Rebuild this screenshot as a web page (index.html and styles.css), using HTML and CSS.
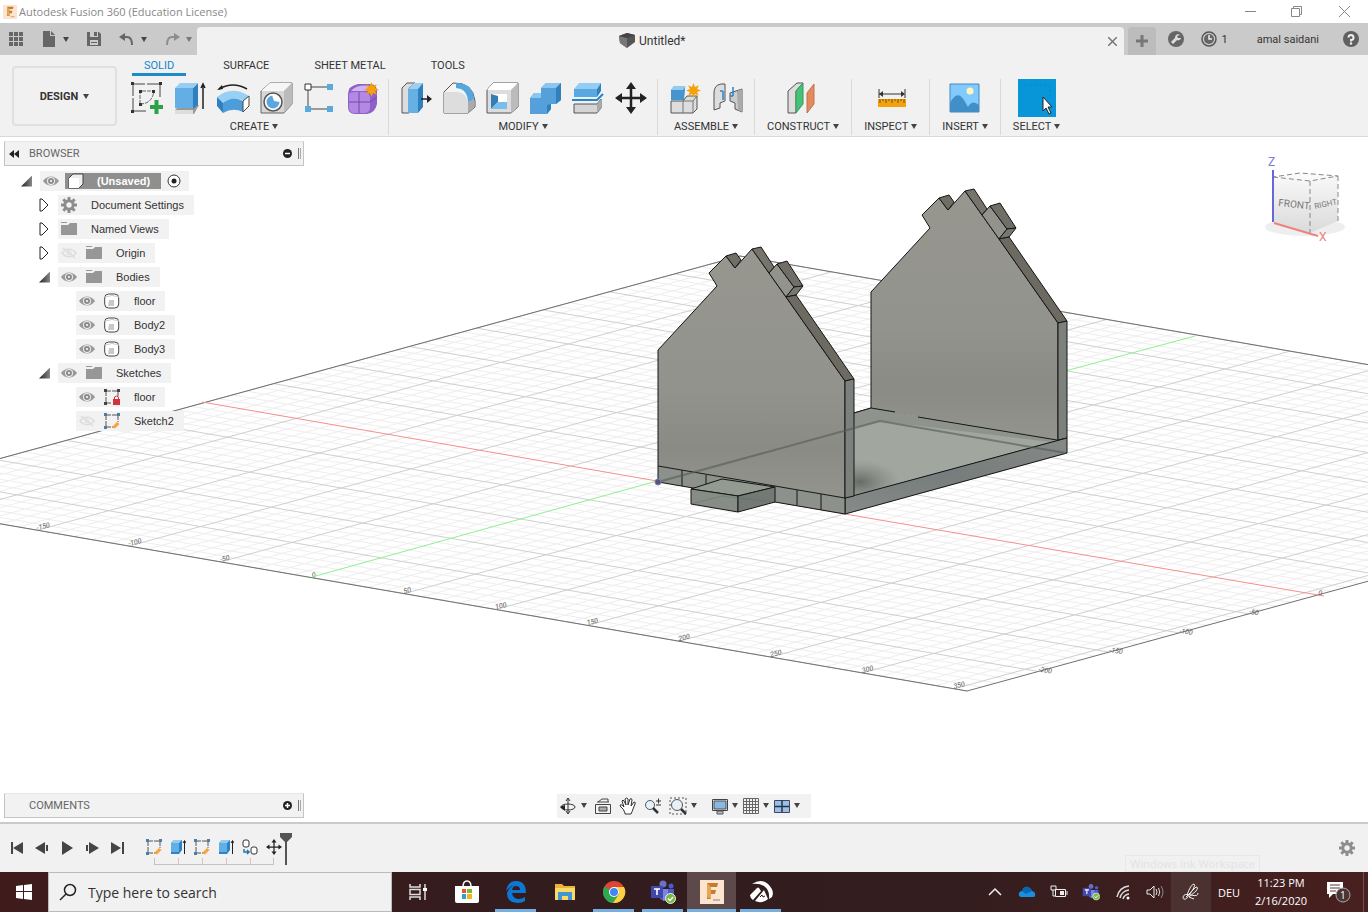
FILE: index.html
```
<!DOCTYPE html>
<html lang="en">

<head>
    <meta charset="UTF-8">
    <meta name="viewport" content="width=device-width, initial-scale=1.0">
    <title>Autodesk Fusion 360 (Education License)</title>
    <link rel="stylesheet" href="styles.css">
</head>

<body>
    <!-- shared icons -->
    <svg class="defs" width="0" height="0" aria-hidden="true">
        <symbol id="eye" viewBox="0 0 16 16">
            <path d="M0 8C4 2 12 2 16 8C12 14 4 14 0 8Z" fill="#999" />
            <circle cx="8" cy="8" r="4" fill="#eee" />
            <circle cx="8" cy="8" r="3" fill="#8c8c8c" />
            <circle cx="8" cy="8" r="1" fill="#fff" />
        </symbol>
        <symbol id="eye-off" viewBox="0 0 16 16">
            <path d="M1 8C5 3 11 3 15 8C11 13 5 13 1 8ZM2 3L14 13" fill="none" stroke="#ddd" stroke-width="1.5" />
            <circle cx="8" cy="8" r="2" fill="none" stroke="#ddd" />
        </symbol>
        <symbol id="folder" viewBox="0 0 16 16">
            <path d="M0 1H6V2H0ZM0 4H7L9 2H16V14H0Z" fill="#979797" />
        </symbol>
        <symbol id="gear" viewBox="0 0 16 16">
            <circle cx="8" cy="8" r="4.2" fill="none" stroke="#8d8d8d" stroke-width="3" />
            <path d="M8 0V3M8 13V16M0 8H3M13 8H16M2.3 2.3L4.5 4.5M11.5 11.5L13.7 13.7M2.3 13.7L4.5 11.5M11.5 4.5L13.7 2.3" stroke="#8d8d8d" stroke-width="3" />
        </symbol>
        <symbol id="body" viewBox="0 0 16 16">
            <rect x=".7" y="1" width="14" height="14" rx="4" fill="#fff" stroke="#444" />
            <path d="M1 4Q8 1 15 4" fill="none" stroke="#ccc" />
            <path d="M5 7H10V13H4Z" fill="#c8c8cc" />
        </symbol>
        <symbol id="sketch" viewBox="0 0 16 16">
            <path d="M2 2H14M2 14H10M2 2V14M14 2V9" fill="none" stroke="#555" stroke-dasharray="5 1" />
            <path d="M0 0H3V3H0ZM13 0H16V3H13ZM0 13H3V16H0Z" fill="#4a7fa5" />
            <path d="M8 14L13 9L15.500 11L11 15.500Z" fill="#f3a63c" />
        </symbol>
        <symbol id="extrude" viewBox="0 0 16 16">
            <path d="M1 4L4 1H12V11L9 15H1Z" fill="#2d83c4" />
            <path d="M1 4H9V13H1Z" fill="#62aee5" />
            <path d="M1 4L4 1H12L9 4Z" fill="#93ccf2" />
            <path d="M14.500 15V2M13 4L14.500 1.500L16 4" stroke="#222" fill="none" />
        </symbol>
        <symbol id="move" viewBox="0 0 32 32">
            <path d="M16 5V27M5 16H27" stroke="#222" stroke-width="2.500" />
            <path d="M16 0L21 7H11ZM16 32L21 25H11ZM0 16L7 11V21ZM32 16L25 11V21Z" fill="#222" />
        </symbol>
        <symbol id="star" viewBox="0 0 16 16">
            <path d="M8 0L9.600 4.200L13.700 2.300L11.800 6.400L16 8L11.800 9.600L13.700 13.700L9.600 11.800L8 16L6.400 11.800L2.300 13.700L4.200 9.600L0 8L4.200 6.400L2.300 2.300L6.400 4.200Z" fill="#f5a10c" />
        </symbol>
        <symbol id="teams" viewBox="0 0 26 24">
            <circle cx="13" cy="4" r="3.500" fill="#6970c8" />
            <circle cx="21" cy="6" r="2.500" fill="#5059c9" />
            <path d="M9 9H24V15Q24 20 19 20H13Q9 20 9 15Z" fill="#5059c9" />
            <path d="M11 9H18V17Q17 21 13 21Z" fill="#7b83eb" />
            <path d="M1 6H13V18H1Z" fill="#4248a8" />
            <path d="M4 9H10M7 9V15" stroke="#fff" stroke-width="1.600" />
            <circle cx="20.500" cy="18.500" r="5" fill="#79b843" stroke="#e8f4dc" />
            <path d="M18 18.500L20 20.500L23 17" fill="none" stroke="#fff" stroke-width="1.400" />
        </symbol>
        <symbol id="fusion" viewBox="0 0 24 24">
            <path d="M0 0H24V24H0Z" fill="#fbe4d0" />
            <path d="M7 3H18L17 7H11V10H16L15 14H11V19H7Z" fill="#c07d2c" />
            <path d="M7 3L11 7V19L7 17Z" fill="#e8a554" />
            <path d="M13 20H20" stroke="#b9a28e" stroke-width="1.500" />
        </symbol>
    </svg>

    <header class="titlebar">
        <svg class="app-icon" viewBox="0 0 24 24"><use href="#fusion" /></svg>
        <h1>Autodesk Fusion 360 (Education License)</h1>
        <button aria-label="Minimize"><svg width="11" height="11"><path d="M0 5.500H11" stroke="#888" /></svg></button>
        <button aria-label="Restore"><svg width="11" height="11"><path d="M.5 2.500H8.500V10.500H.5ZM2.500 2.500V.5H10.500V8.500H8.500" fill="none" stroke="#888" /></svg></button>
        <button aria-label="Close"><svg width="11" height="11"><path d="M0 0L11 11M11 0L0 11" stroke="#888" /></svg></button>
    </header>

    <div class="tabbar">
        <div class="quick">
            <button aria-label="Data panel"><svg width="16" height="16"><path d="M1 1H5V5H1ZM6 1H10V5H6ZM11 1H15V5H11ZM1 6H5V10H1ZM6 6H10V10H6ZM11 6H15V10H11ZM1 11H5V15H1ZM6 11H10V15H6ZM11 11H15V15H11Z" fill="#666" /></svg></button>
            <button aria-label="File"><svg width="16" height="16"><path d="M2 0H9V5H14V16H2ZM10 0L14 4H10Z" fill="#666" /></svg><i class="caret"></i></button>
            <button aria-label="Save"><svg width="16" height="16"><path d="M1 1H13L15 3V15H1Z" fill="#666" /><path d="M4 1H12V6H4ZM4 9H12V14H4Z" fill="#ccc" /><path d="M8 1H11V5H8ZM5 11H11V12H5Z" fill="#666" /></svg></button>
            <button aria-label="Undo"><svg width="16" height="16"><path d="M6 2V10L0 6Z" fill="#666" /><path d="M4 6H8Q13 6 13 14" fill="none" stroke="#666" stroke-width="2" /></svg><i class="caret"></i></button>
            <button aria-label="Redo" class="faded"><svg width="16" height="16"><path d="M10 2V10L16 6Z" fill="#666" /><path d="M12 6H8Q3 6 3 14" fill="none" stroke="#666" stroke-width="2" /></svg><i class="caret"></i></button>
        </div>
        <div class="doc-tab">
            <span class="doc-name">
                <svg width="16" height="16"><path d="M0 3L8 0L16 2V9L8 15L1 10Z" fill="#555" /><path d="M0 3L8 5V15L1 10Z" fill="#777" /><path d="M0 3L8 0L16 2L8 5Z" fill="#444" /></svg>
                Untitled*
            </span>
            <button aria-label="Close tab"><svg width="9" height="9"><path d="M0 0L9 9M9 0L0 9" stroke="#777" stroke-width="1.500" /></svg></button>
        </div>
        <button class="new-tab" aria-label="New tab"><svg width="12" height="12"><path d="M6 0V12M0 6H12" stroke="#777" stroke-width="3" /></svg></button>
        <div class="account">
            <button aria-label="Extensions"><svg width="16" height="16"><circle cx="8" cy="8" r="8" fill="#666" /><path d="M4 12L9 7" stroke="#ddd" stroke-width="3" /><path d="M12 4A3 3 0 1 0 13 7L10 7L9 5Z" fill="#ddd" /></svg></button>
            <button aria-label="Job status"><svg width="16" height="16"><circle cx="8" cy="8" r="7" fill="none" stroke="#555" stroke-width="1.500" /><circle cx="8" cy="8" r="5" fill="#666" /><path d="M8 4V8H11" fill="none" stroke="#eee" stroke-width="1.500" /></svg>1</button>
            <a href="#" class="user">amal saidani</a>
            <button aria-label="Help"><svg width="16" height="16"><circle cx="8" cy="8" r="8" fill="#606060" /><path d="M5.500 6.500A2.500 2.500 0 1 1 8 9V10.500" fill="none" stroke="#eee" stroke-width="2" /><circle cx="8" cy="12.500" r="1.200" fill="#eee" /></svg></button>
        </div>
    </div>

    <section class="ribbon">
        <button class="workspace">DESIGN <i class="caret"></i></button>
        <div class="tools">
            <nav>
                <a href="#" class="active">SOLID</a>
                <a href="#">SURFACE</a>
                <a href="#">SHEET METAL</a>
                <a href="#">TOOLS</a>
            </nav>
            <div class="groups">
                <div class="group">
                    <div class="icons">
                        <button aria-label="Create sketch"><svg width="34" height="34"><path d="M3 3H30V18M3 3V30H18" fill="none" stroke="#444" stroke-dasharray="12 2" /><path d="M10 23V10H24M10 23Q22 23 24 10" fill="none" stroke="#666" stroke-dasharray="4 1" /><path d="M1 1H4V4H1ZM29 1H32V4H29ZM1 29H4V32H1ZM9 9H12V12H9ZM22 9H25V12H22ZM9 22H12V25H9Z" fill="#333" /><path d="M20 26H33M26.500 19V33" stroke="#2ba14a" stroke-width="4" /></svg></button>
                        <button aria-label="Extrude"><svg width="34" height="34"><path d="M2 29L7 24H26L21 33H2Z" fill="#999" /><path d="M2 29H20V33H2Z" fill="#ddd" /><path d="M20 7L25 2V24L20 28Z" fill="#2f80bd" /><path d="M2 7L7 2H25L20 7Z" fill="#95cdf3" /><path d="M2 7H20V27H2Z" fill="#62aee5" /><path d="M30 28V4M28 7L30 3L32 7" fill="none" stroke="#222" stroke-width="1.500" /></svg></button>
                        <button aria-label="Revolve"><svg width="34" height="34"><path d="M3 8Q17 0 31 8" fill="none" stroke="#222" stroke-width="1.500" /><path d="M1 9L6 4L7 8Z" fill="#222" /><path d="M1 16Q16 4 33 15L29 20Q17 14 7 22Z" fill="#98cff4" /><path d="M1 16L7 22V32L1 25Z" fill="#2f80bd" /><path d="M7 22Q17 14 27 20V31Q17 26 7 32Z" fill="#4d9dda" /><path d="M27 20L33 15V25L27 31Z" fill="#fff" stroke="#444" /></svg></button>
                        <button aria-label="Hole"><svg width="34" height="34"><path d="M2 10L11 2H33V23L25 32H2Z" fill="#d6d6d6" stroke="#666" /><path d="M2 10L11 2H33L25 10Z" fill="#f6f6f6" /><path d="M25 10L33 2V23L25 32Z" fill="#bbb" /><circle cx="14" cy="21" r="9" fill="#fff" stroke="#555" stroke-width="1.500" /><circle cx="14" cy="21" r="6.500" fill="#5ba6de" /><path d="M13 14A7 7 0 0 1 21 21L15 20Z" fill="#fff" /></svg></button>
                        <button aria-label="Pattern"><svg width="34" height="34"><path d="M8 6H26M6 8V27M8 28H26" fill="none" stroke="#444" /><path d="M3 3H9V9H3Z" fill="#fff" stroke="#333" /><path d="M25 3H31V9H25ZM3 25H9V31H3ZM25 25H31V31H25Z" fill="#5ca9dc" /></svg></button>
                        <button aria-label="Create form"><svg width="34" height="34"><path d="M3 13Q3 5 13 3H25Q33 3 32 13V23Q30 32 22 33H10Q3 33 3 26Z" fill="#8f60c8" /><path d="M4 13Q5 11 10 11H19Q25 11 25 17V26Q25 32 19 32H10Q4 32 4 26Z" fill="#b388e5" /><path d="M6 10Q12 3 25 5L22 10Z" fill="#d1b3f3" /><path d="M14 11V32M4 21H25L32 16" fill="none" stroke="#7447ad" /><use href="#star" x="19" y="1" width="15" height="15" /></svg></button>
                    </div>
                    <button class="menu">CREATE <i class="caret"></i></button>
                </div>
                <div class="group">
                    <div class="icons">
                        <button aria-label="Press pull"><svg width="34" height="34"><path d="M3 7L8 2H16L10 7V32H3Z" fill="#ddd" stroke="#555" /><path d="M9 8L15 2H24L19 8Z" fill="#9bd0f4" /><path d="M9 8H19V32H9Z" fill="#66b0e4" /><path d="M19 8L24 2V26L19 32Z" fill="#2f80bd" /><path d="M22 18H30" stroke="#222" stroke-width="1.500" /><path d="M28 14L33 18L28 22Z" fill="#222" /></svg></button>
                        <button aria-label="Fillet"><svg width="34" height="34"><path d="M2 11L11 2Q31 1 33 20V26L26 32H2Z" fill="#f4f4f4" stroke="#555" /><path d="M14 2Q31 2 32 18L26 22Q26 8 14 7Z" fill="#56a7df" /><path d="M2 11H14Q25 11 26 23V32H2Z" fill="#ddd" /><path d="M26 22L32 18V26L26 32Z" fill="#aaa" /></svg></button>
                        <button aria-label="Shell"><svg width="34" height="34"><path d="M2 9L8 2H33V26L26 32H2Z" fill="#ddd" stroke="#555" /><path d="M2 9L8 2H33L26 9Z" fill="#fff" /><path d="M26 9L33 2V26L26 32Z" fill="#bbb" /><path d="M6 13H22V28H6Z" fill="#fff" /><path d="M6 13L13 15V21L6 28Z" fill="#347eb5" /><path d="M13 21H22V28H6Z" fill="#78bdeb" /></svg></button>
                        <button aria-label="Combine"><svg width="34" height="34"><path d="M2 17L6 12H13V7L18 2H33V19L28 23H23V28L19 33H2Z" fill="#559fda" /><path d="M2 17L6 12H13V17ZM13 7L18 2H33L28 7Z" fill="#8cc6ef" /><path d="M28 7L33 2V19L28 23ZM19 24L23 23V28L19 33Z" fill="#2f80bd" /></svg></button>
                        <button aria-label="Split body"><svg width="34" height="34"><path d="M3 8L8 2H30L26 8Z" fill="#94cdf3" /><path d="M3 8H26V16H3Z" fill="#58a8e2" /><path d="M26 8L30 2V10L26 16Z" fill="#2f80bd" /><path d="M1 19H26L32 13" fill="none" stroke="#2186d2" stroke-width="2" /><path d="M3 23H26L30 18V27L26 32H3Z" fill="#d4d4d4" stroke="#555" /><path d="M26 23L30 18V27L26 32Z" fill="#aaa" /></svg></button>
                        <button aria-label="Move"><svg width="32" height="32"><use href="#move" /></svg></button>
                    </div>
                    <button class="menu">MODIFY <i class="caret"></i></button>
                </div>
                <div class="group">
                    <div class="icons">
                        <button aria-label="New component"><svg width="34" height="34"><path d="M3 9L6 5H17V9L16 19H3Z" fill="#4795cf" /><path d="M3 9L6 5H18L15 9Z" fill="#91cbf2" /><path d="M3 20H15L19 15H29V28L25 32H3Z" fill="#ddd" stroke="#555" /><path d="M15 20H25V32M15 20V32M25 20L29 15" fill="none" stroke="#777" /><use href="#star" x="18" y="2" width="15" height="15" /></svg></button>
                        <button aria-label="Joint"><svg width="34" height="34"><path d="M3 12Q3 4 10 3H14V20L9 22V27L3 29Z" fill="#ddd" stroke="#555" /><path d="M19 12L31 8V31L24 28V22L19 20Z" fill="#ccc" stroke="#555" /><path d="M26 10L31 8V31L27 29Z" fill="#aaa" /><path d="M12 10V19M22 6V15M9 10H12M19 15H22" fill="none" stroke="#2d84c6" stroke-width="1.500" /></svg></button>
                    </div>
                    <button class="menu">ASSEMBLE <i class="caret"></i></button>
                </div>
                <div class="group wide">
                    <div class="icons">
                        <button aria-label="Construct"><svg width="34" height="34"><path d="M2 10L11 2H17L10 10V32H2Z" fill="#ddd" stroke="#555" /><path d="M10 10L17 2V23L10 32Z" fill="#45c274" stroke="#3d9661" /><path d="M21 12L28 3V23L21 32Z" fill="#e58b5b" stroke="#bc7450" /></svg></button>
                    </div>
                    <button class="menu">CONSTRUCT <i class="caret"></i></button>
                </div>
                <div class="group wide">
                    <div class="icons">
                        <button aria-label="Inspect"><svg width="34" height="34"><path d="M5 8V17M31 8V17M5 13H30" stroke="#333" /><path d="M5 13L9 10V16ZM31 13L27 10V16Z" fill="#333" /><path d="M4 18H32V26H4Z" fill="#f3a20c" /><path d="M6 18V22M9 18V20M12 18V22M15 18V20M18 18V22M21 18V20M24 18V22M27 18V20M30 18V22" stroke="#76500b" /></svg></button>
                    </div>
                    <button class="menu">INSPECT <i class="caret"></i></button>
                </div>
                <div class="group wide">
                    <div class="icons">
                        <button aria-label="Insert"><svg width="34" height="34"><path d="M2 3H31V31H2Z" fill="#82cafd" stroke="#4688b5" /><circle cx="22" cy="10" r="3.500" fill="#fff6bd" /><path d="M2 22Q9 8 16 19L20 26Q24 18 31 24V31H2Z" fill="#408fc9" /></svg></button>
                    </div>
                    <button class="menu">INSERT <i class="caret"></i></button>
                </div>
                <div class="group wide">
                    <div class="icons">
                        <button aria-label="Select" class="selected"><svg width="38" height="38"><path d="M6 6H32V20" fill="none" stroke="#078acb" stroke-dasharray="3 2" /><path d="M25 18V32L28 29L31 35L33 34L30 28H34Z" fill="#fff" stroke="#222" /></svg></button>
                    </div>
                    <button class="menu">SELECT <i class="caret"></i></button>
                </div>
            </div>
        </div>
    </section>

    <main class="viewport">
        <svg class="scene" viewBox="0 137 1368 685" preserveAspectRatio="xMidYMid slice">
            <defs>
                <linearGradient id="wallShade" x1="0" y1="0" x2="0" y2="1">
                    <stop offset="0" stop-color="#979790" />
                    <stop offset=".55" stop-color="#92938c" />
                    <stop offset=".8" stop-color="#8a8b85" />
                    <stop offset="1" stop-color="#92948d" />
                </linearGradient>
                <linearGradient id="sideShade" x1="0" y1="1" x2="1" y2="0">
                    <stop offset="0" stop-color="#868b89" />
                    <stop offset=".5" stop-color="#777d7c" />
                    <stop offset="1" stop-color="#868a87" />
                </linearGradient>
                <radialGradient id="shadow">
                    <stop offset="0" stop-color="#50534f" stop-opacity=".7" />
                    <stop offset="1" stop-color="#70736f" stop-opacity="0" />
                </radialGradient>
                <linearGradient id="cubeShade" x1="0" y1="0" x2="0" y2="1">
                    <stop offset="0" stop-color="#f8f8f8" />
                    <stop offset="1" stop-color="#dadada" />
                </linearGradient>
                <clipPath id="floorClip"><path d="M854 413L871 408L1057 440L844 498Z" /></clipPath>
                <!-- one gable wall, used for both ends of the house -->
                <g id="wall">
                    <path d="M658 350L717 286L709 273L726 256L735 268L752 249L769 273L786 297L845 381V498L658 466Z" fill="url(#wallShade)" stroke="none" />
                    <path d="M658 466V350L717 286L709 273L726 256L735 268L752 249L769 273L786 297L845 381V498" fill="none" />
                    <path d="M726 256L736 253L741 260L735 268Z" fill="#706e65" />
                    <path d="M752 249L761 247L774 267L769 273Z" fill="#77756b" />
                    <path d="M769 273L777 264L794 287L786 297Z" fill="#92938b" />
                    <path d="M777 264L787 261L803 286L794 287Z" fill="#706e65" />
                    <path d="M794 287L803 286L796 295L786 297Z" fill="#777971" />
                    <path d="M786 297L796 295L854 379L845 381Z" fill="#6c6a61" />
                    <path d="M845 381L854 379V496L845 498Z" fill="#7d817d" />
                </g>
            </defs>
            <g id="grid"></g>
            <g class="ticks" id="ticks"></g>
            <path d="M202 402L657 481L845 514L1324 596" class="axis-x" />
            <path d="M312 577L657 481L1195 336" class="axis-y" />

            <g class="model">
                <path d="M845 498L854 413L871 408L1067 438Z" fill="#a2a7a0" />
                <use href="#wall" x="213" y="-58" />
                <path d="M854 413L871 408L1057 440L845 498Z" fill="#a1a69f" stroke="none" />
                <path d="M854 413L871 408L1057 440L1050 442L880 421L854 428Z" fill="#8e938d" stroke="none" />
                <ellipse cx="860" cy="482" rx="40" ry="22" fill="url(#shadow)" stroke="none" clip-path="url(#floorClip)" />
                <path d="M854 413L871 408L895 412M918 417L1057 440" fill="none" />
                <path d="M845 498L1067 438V453L845 514Z" fill="url(#sideShade)" />
                <use href="#wall" />
                <path d="M658 466L845 498V514L658 482Z" fill="#8c918b" />
                <path d="M682 470V486M706 475V486M797 490V505M821 494V510" />
                <path d="M658 482L880 421L1066 453" class="hidden-edge" />
                <path d="M691 489L722 479L775 487L738 496Z" fill="#929a91" />
                <path d="M691 489L738 496V512L691 504Z" fill="#868d86" />
                <path d="M738 496L775 487V502L738 512Z" fill="#737a75" />
                <path d="M691 504L722 496L738 498L775 502" class="hidden-edge faint" />
                <circle cx="658" cy="482" r="3" fill="#55577a" stroke="#7a7aae" />
            </g>

            <!-- view cube -->
            <g class="cube">
                <ellipse cx="1305" cy="227" rx="40" ry="9" fill="#ddd" opacity=".5" />
                <path d="M1273 177L1310 181V233L1274 222Z" fill="url(#cubeShade)" />
                <path d="M1310 181L1338 176V221L1310 233Z" fill="url(#cubeShade)" />
                <path d="M1273 177L1300 173L1338 176L1310 181Z" fill="#fafafa" />
                <path d="M1273 177L1310 181L1338 176L1300 173ZM1310 181V233M1338 176V221" class="cube-edge" />
                <path d="M1273 170V222" stroke="#6767dc" stroke-width="2" />
                <path d="M1274 223L1318 236" stroke="#ee8080" stroke-width="2" />
                <text x="1268" y="166" class="z">Z</text>
                <text x="1319" y="241" class="x">X</text>
                <text transform="translate(1278 206) rotate(6)">FRONT</text>
                <text transform="translate(1315 209) rotate(-12)" class="small">RIGHT</text>
            </g>
        </svg>

        <div class="panel browser">
            <svg width="10" height="8"><path d="M5 0V8L0 4ZM10 0V8L5 4Z" fill="#222" /></svg>
            <h2>BROWSER</h2>
            <button aria-label="Collapse browser"><svg width="9" height="9"><circle cx="4.500" cy="4.500" r="4.500" fill="#222" /><path d="M2 4.500H7" stroke="#fff" stroke-width="1.500" /></svg></button>
            <i class="grip"></i>
        </div>
        <ul class="tree">
            <li class="root"><i class="open"></i><span class="chip"><svg><use href="#eye" /></svg><span class="marked"><svg><path d="M1 5L5 1H15V11L11 15H1Z" fill="#eee" stroke="#444" /><path d="M1 5H11V15H1Z" fill="#fff" /></svg><b>(Unsaved)</b></span><svg class="radio" viewBox="0 0 14 14"><circle cx="7" cy="7" r="6" fill="#fff" stroke="#333" /><circle cx="7" cy="7" r="2.500" fill="#222" /></svg></span></li>
            <li><svg class="closed" viewBox="0 0 10 14"><path d="M1 1H3L9 7L3 13H1Z" fill="#fff" stroke="#222" /></svg><span class="chip one"><svg><use href="#gear" /></svg>Document Settings</span></li>
            <li><svg class="closed" viewBox="0 0 10 14"><path d="M1 1H3L9 7L3 13H1Z" fill="#fff" stroke="#222" /></svg><span class="chip one"><svg><use href="#folder" /></svg>Named Views</span></li>
            <li><svg class="closed" viewBox="0 0 10 14"><path d="M1 1H3L9 7L3 13H1Z" fill="#fff" stroke="#222" /></svg><span class="chip"><svg><use href="#eye-off" /></svg><svg><use href="#folder" /></svg>Origin</span></li>
            <li><i class="open"></i><span class="chip"><svg><use href="#eye" /></svg><svg><use href="#folder" /></svg>Bodies</span></li>
            <li class="leaf"><span class="chip"><svg><use href="#eye" /></svg><svg><use href="#body" /></svg>floor</span></li>
            <li class="leaf"><span class="chip"><svg><use href="#eye" /></svg><svg><use href="#body" /></svg>Body2</span></li>
            <li class="leaf"><span class="chip"><svg><use href="#eye" /></svg><svg><use href="#body" /></svg>Body3</span></li>
            <li><i class="open"></i><span class="chip"><svg><use href="#eye" /></svg><svg><use href="#folder" /></svg>Sketches</span></li>
            <li class="leaf"><span class="chip"><svg><use href="#eye" /></svg><svg><path d="M2 2H14M2 14H8M2 2V14M14 2V8" fill="none" stroke="#555" stroke-dasharray="5 1" /><path d="M0 0H3V3H0ZM13 0H16V3H13ZM0 13H3V16H0Z" fill="#444" /><path d="M9 10H16V16H9Z" fill="#d3323c" /><path d="M10.500 10V8Q12.500 6 14.500 8V10" fill="none" stroke="#d3323c" /></svg>floor</span></li>
            <li class="leaf"><span class="chip"><svg><use href="#eye-off" /></svg><svg><use href="#sketch" /></svg>Sketch2</span></li>
        </ul>

        <div class="bottom-row">
            <div class="panel">
                <h2>COMMENTS</h2>
                <button aria-label="Expand comments"><svg width="9" height="9"><circle cx="4.500" cy="4.500" r="4.500" fill="#222" /><path d="M2 4.500H7M4.500 2V7" stroke="#fff" stroke-width="1.500" /></svg></button>
                <i class="grip"></i>
            </div>
            <div class="navbar">
                <button aria-label="Orbit"><svg width="18" height="18"><ellipse cx="9" cy="10" rx="7" ry="3" fill="none" stroke="#333" /><path d="M9 2V16M7 4L9 1L11 4M7 14L9 17L11 14" fill="none" stroke="#333" /><path d="M1 10L6 8V14Z" fill="#222" /></svg><i class="caret"></i></button>
                <button aria-label="Look at"><svg width="18" height="18"><path d="M1.500 7.500H16.500V16.500H1.500ZM3 5H15M4 5L8 2H14V5" fill="none" stroke="#444" /><path d="M5 10H13V14H5Z" fill="#aaa" stroke="#444" /></svg></button>
                <button aria-label="Pan"><svg width="18" height="18"><path d="M6 16Q5 12 1 9Q1 7 3 8L5 10L3 4Q4 2 5 4L7 8L6 2Q8 0 9 2V8L11 2Q13 1 13 3L12 9L15 5Q17 5 16 7L14 12Q13 15 12 17H6Z" fill="#fff" stroke="#333" /></svg></button>
                <button aria-label="Zoom"><svg width="18" height="18"><circle cx="6" cy="8" r="4.500" fill="#e5f1fa" stroke="#555" /><path d="M9 11L14 16" stroke="#333" stroke-width="2.500" /><path d="M12 4H17M14.500 1.500V6.500M12 8H17" stroke="#333" /></svg></button>
                <button aria-label="Fit"><svg width="18" height="18"><path d="M1 1H17V17H1Z" fill="none" stroke="#555" stroke-dasharray="2 2" /><circle cx="8" cy="8" r="5.500" fill="#e5f1fa" stroke="#555" /><path d="M12 12L17 17" stroke="#333" stroke-width="2.500" /></svg><i class="caret"></i></button>
                <button aria-label="Display settings" class="spaced"><svg width="18" height="18"><path d="M1.500 2.500H16.500V13.500H1.500Z" fill="#e8e8e8" stroke="#444" /><path d="M3 4H15V12H3Z" fill="#8cb8df" stroke="#456" /><path d="M6 14H12V17H6Z" fill="#bbb" stroke="#555" /></svg><i class="caret"></i></button>
                <button aria-label="Grid and snaps"><svg width="18" height="18"><path d="M1.500 1.500H16.500V16.500H1.500ZM4.500 1V17M7.500 1V17M10.500 1V17M13.500 1V17M1 4.500H17M1 7.500H17M1 10.500H17M1 13.500H17" fill="none" stroke="#666" /></svg><i class="caret"></i></button>
                <button aria-label="Viewports"><svg width="18" height="18"><path d="M1.500 3.500H16.500V15.500H1.500Z" fill="#9cc0e3" stroke="#446" /><path d="M9 3V15M2 9.500H16" stroke="#235" stroke-width="1.500" /></svg><i class="caret"></i></button>
            </div>
        </div>
    </main>

    <footer class="timeline">
        <div class="player">
            <button aria-label="Go to start"><svg width="14" height="14"><path d="M2 1V13" stroke="#444" stroke-width="2" /><path d="M13 1V13L3 7Z" fill="#444" /></svg></button>
            <button aria-label="Step back"><svg width="14" height="14"><path d="M10 1V13L0 7Z" fill="#444" /><path d="M12 4V10" stroke="#444" stroke-width="2" /></svg></button>
            <button aria-label="Play"><svg width="14" height="14"><path d="M2 0V14L13 7Z" fill="#444" /></svg></button>
            <button aria-label="Step forward"><svg width="14" height="14"><path d="M4 1V13L14 7Z" fill="#444" /><path d="M2 4V10" stroke="#444" stroke-width="2" /></svg></button>
            <button aria-label="Go to end"><svg width="14" height="14"><path d="M13 1V13" stroke="#444" stroke-width="2" /><path d="M1 1V13L11 7Z" fill="#444" /></svg></button>
        </div>
        <div class="history">
            <button aria-label="Sketch 1"><svg width="16" height="16"><use href="#sketch" /></svg></button>
            <button aria-label="Extrude 1"><svg width="16" height="16"><use href="#extrude" /></svg></button>
            <button aria-label="Sketch 2"><svg width="16" height="16"><use href="#sketch" /></svg></button>
            <button aria-label="Extrude 2"><svg width="16" height="16"><use href="#extrude" /></svg></button>
            <button aria-label="Copy paste bodies"><svg width="16" height="16"><rect x="1" y="1" width="6" height="7" rx="2" fill="#fff" stroke="#333" /><rect x="9" y="8" width="6" height="7" rx="2" fill="#fff" stroke="#333" /><path d="M2 10V13H7M5 11L7 13L5 15" fill="none" stroke="#2874a8" stroke-width="1.500" /></svg></button>
            <button aria-label="Move"><svg width="16" height="16"><use href="#move" /></svg></button>
        </div>
        <svg class="marker" width="12" height="32"><path d="M0 0H12V4L7 9V32H5V9L0 4Z" fill="#555" /></svg>
        <span class="ghost">Windows Ink Workspace</span>
        <button class="settings" aria-label="Timeline settings"><svg width="16" height="16"><use href="#gear" /></svg></button>
    </footer>

    <div class="taskbar">
        <button class="start" aria-label="Start"><svg width="16" height="16"><path d="M0 2L7 1V7H0ZM8 1L16 0V7H8ZM0 8H7V15L0 14ZM8 8H16V16L8 15Z" fill="#fff" /></svg></button>
        <label class="search">
            <svg width="18" height="18"><circle cx="11" cy="7" r="5.500" fill="none" stroke="#222" stroke-width="1.500" /><path d="M7 11L1 17" stroke="#222" stroke-width="1.500" /></svg>
            <input type="text" placeholder="Type here to search" aria-label="Search">
        </label>
        <div class="apps">
            <button aria-label="Task view"><svg width="18" height="18"><path d="M1 1V4H11V1M1 17V14H11V17M16 1V17M1 6.500H11V11.500H1Z" fill="none" stroke="#ddd" stroke-width="1.500" /><path d="M14 5H18V8H14Z" fill="#fff" /></svg></button>
            <button aria-label="Store"><svg width="26" height="24"><path d="M9 7Q9 1 13 1T17 7" fill="none" stroke="#fff" stroke-width="1.500" /><path d="M1 6H25V21Q25 23 23 23H3Q1 23 1 21Z" fill="#fff" /><path d="M8 9H12V13H8Z" fill="#e95529" /><path d="M13 9H18V13H13Z" fill="#83b62e" /><path d="M8 14H12V19H8Z" fill="#2aa1db" /><path d="M13 14H18V19H13Z" fill="#f2b51e" /></svg></button>
            <button aria-label="Edge" class="running"><svg width="24" height="24"><path d="M2 11Q4 1 12 1Q22 1 22 13H8Q9 19 15 19Q18 19 21 17V21Q18 23 14 23Q3 23 3 13Q5 7 11 5Q6 6 2 11ZM8 10H16Q16 6 12 6Q9 6 8 10Z" fill="#0c78d4" fill-rule="evenodd" /></svg></button>
            <button aria-label="File explorer"><svg width="24" height="24"><path d="M2 4H9L11 6H22V20H2Z" fill="#e8b43a" /><path d="M2 8H22V20H2Z" fill="#fbd968" /><path d="M5 12H19V20H15V16H9V20H5Z" fill="#3f96d2" /></svg></button>
            <button aria-label="Chrome" class="running"><svg width="24" height="24"><circle cx="12" cy="12" r="11" fill="#de4536" /><path d="M12 12L2.500 6.500A11 11 0 0 0 11 23L17 15Z" fill="#2da94f" /><path d="M12 7H22A11 11 0 0 1 11 23L17 14Z" fill="#fdd13f" /><circle cx="12" cy="12" r="5" fill="#fff" /><circle cx="12" cy="12" r="4" fill="#4285f4" /></svg></button>
            <button aria-label="Teams" class="running"><svg width="26" height="24"><use href="#teams" /></svg></button>
            <button aria-label="Fusion 360" class="running current"><svg width="24" height="24"><use href="#fusion" /></svg></button>
            <button aria-label="Pixel editor" class="running"><svg width="26" height="24"><path d="M4 4Q13 -2 20 4Q27 11 24 17L21 19Q22 10 16 6Q11 3 4 4Z" fill="#fff" /><path d="M2 15L9 8Q10 7 11 8L13 11L5 20Q2 18 2 15ZM7 21L16 10L20 19Q14 24 7 21Z" fill="#fff" /><path d="M12 17L14 15L15 17L17 16" stroke="#321c1d" fill="none" /></svg></button>
        </div>
        <div class="tray">
            <button aria-label="Show hidden icons"><svg width="14" height="10"><path d="M1 8L7 2L13 8" fill="none" stroke="#eee" stroke-width="1.500" /></svg></button>
            <button aria-label="OneDrive"><svg width="18" height="12"><path d="M3 11Q0 10 1 7Q2 5 4 5Q6 0 10 1Q13 2 14 5Q18 6 17 10Q17 11 15 11Z" fill="#1990df" /><path d="M4 5Q6 0 10 1Q13 2 14 5L8 8Z" fill="#0a65b5" /></svg></button>
            <button aria-label="Battery"><svg width="18" height="14"><path d="M5.500 4.500H15.500V11.500H5.500ZM17 6V10" fill="none" stroke="#eee" /><path d="M1 1H6V5H1ZM3 5V11H5" fill="none" stroke="#eee" /><path d="M10 6H14V10H10Z" fill="#eee" /></svg></button>
            <button aria-label="Teams status"><svg width="18" height="18"><use href="#teams" /></svg></button>
            <button aria-label="Network"><svg width="16" height="16"><path d="M2 13A13 13 0 0 1 14 2M5 14A10 10 0 0 1 14 6M8 15A7 7 0 0 1 14 10" fill="none" stroke="#ddd" stroke-width="1.500" /><circle cx="13" cy="14" r="1.500" fill="#fff" /></svg></button>
            <button aria-label="Volume"><svg width="18" height="14"><path d="M1 5H4L8 1V13L4 9H1Z" fill="none" stroke="#eee" /><path d="M10 4Q12 7 10 10M12.500 3Q15 7 12.500 11" fill="none" stroke="#ddd" /><path d="M15 1Q19 7 15 13" fill="none" stroke="#888" /></svg></button>
            <button class="ink" aria-label="Windows Ink"><svg width="18" height="18"><path d="M5 12Q9 1 12 1Q15 2 5 15Q1 18 1 14Q2 10 9 12T16 10M4 14L14 4Q17 4 14 8L7 14L12 16" fill="none" stroke="#eee" /></svg></button>
            <button class="lang">DEU</button>
            <button class="clock">11:23 PM<br>2/16/2020</button>
            <button class="notes" aria-label="1 notification"><svg width="26" height="24"><path d="M1 2H17V14H7L3 18V14H1Z" fill="#fff" /><path d="M4 5H14M4 8H14M4 11H10" stroke="#5a3534" /><circle cx="17" cy="15" r="7" fill="#4a3534" stroke="#aaa" /><text x="14" y="19">1</text></svg></button>
        </div>
    </div>

    <script>
        let grid = document.getElementById("grid");
        let ticks = document.getElementById("ticks");
        const svgNS = "http://www.w3.org/2000/svg";

        // u runs along the red axis (-5 to 7.14), v along the green axis (-5 to 8)
        const point = (u, v) => {
            let s = (v + 5) / 13;
            let t = s * 1.05 / (1 + 0.05 * s);
            let w = (u + 5) / 12.14;
            return [-146 + w * 1113 + t * 886, 498.5 + w * 192.5 - t * 242.5];
        }

        const addLine = (from, to, name) => {
            let line = document.createElementNS(svgNS, "line");
            line.setAttribute("x1", from[0]);
            line.setAttribute("y1", from[1]);
            line.setAttribute("x2", to[0]);
            line.setAttribute("y2", to[1]);
            line.setAttribute("class", name);
            grid.appendChild(line);
        }

        const addTick = (p, angle, value) => {
            let text = document.createElementNS(svgNS, "text");
            text.setAttribute("transform", `translate(${p[0]} ${p[1]}) rotate(${angle})`);
            text.textContent = value;
            ticks.appendChild(text);
        }

        for (let pass of ["minor", "major"]) {
            for (let i = -25; i <= 40; i++) {
                let name = i % 5 == 0 ? "major" : "minor";
                // the two axes have their own coloured lines
                if (name != pass || i == 0) continue;
                if (i <= 35) addLine(point(i / 5, -5), point(i / 5, 8), name);
                addLine(point(-5, i / 5), point(7.14, i / 5), name);
            }
        }
        addLine(point(-5, -5), point(7.14, -5), "edge");
        addLine(point(-5, 8), point(7.14, 8), "edge");
        addLine(point(-5, -5), point(-5, 8), "edge");
        addLine(point(7.14, -5), point(7.14, 8), "edge");

        for (let u = -3; u <= 7; u++) addTick(point(u, -5), -14, u * 50);
        for (let v = -4; v <= 0; v++) addTick(point(7.14, v), 9, v * 50);
    </script>
</body>

</html>
```
FILE: styles.css
```
* {
    margin: 0;
    padding: 0;
    box-sizing: border-box;
}

body {
    display: flex;
    flex-direction: column;
    min-height: 100vh;
    font-family: Roboto, "Liberation Sans", sans-serif;
    font-size: 11px;
    color: #333;
    background-color: white;
}

button {
    display: flex;
    align-items: center;
    justify-content: center;
    border: none;
    background: none;
    font: inherit;
    color: inherit;
}

a {
    color: inherit;
    text-decoration: none;
}

svg {
    flex: none;
}

.defs {
    position: absolute;
}

.caret {
    border: 3px solid transparent;
    border-top: 5px solid #444;
    border-bottom: none;
}

/* title bar */
.titlebar {
    display: flex;
    align-items: center;
    height: 23px;
    padding-left: 3px;
    gap: 2px;
    font-family: "Open Sans", sans-serif;
}

.app-icon {
    width: 14px;
    height: 14px;
}

.titlebar h1 {
    flex: 1;
    font-size: 11px;
    font-weight: normal;
    color: #888;
}

.titlebar button {
    width: 44px;
    height: 23px;
}

.titlebar button:last-child {
    width: 48px;
}

/* document tabs */
.tabbar {
    display: flex;
    height: 32px;
    padding-top: 4px;
    background-color: #cacaca;
}

.quick {
    display: flex;
    align-items: center;
    width: 197px;
    padding-left: 8px;
    gap: 17px;
    padding-bottom: 4px;
}

.quick button {
    gap: 6px;
}

.faded {
    opacity: .6;
}

.doc-tab {
    display: flex;
    flex: 1;
    align-items: center;
    padding-right: 6px;
    border-radius: 4px 4px 0 0;
    background-color: #f1f1f1;
}

.doc-name {
    display: flex;
    flex: 1;
    align-items: center;
    justify-content: center;
    gap: 4px;
    font-size: 12px;
}

.doc-tab button {
    width: 10px;
}

.new-tab {
    width: 28px;
    margin-left: 4px;
    border-radius: 4px 4px 0 0;
    background-color: #bcbcbc;
}

.account {
    display: flex;
    align-items: center;
    padding: 0 9px 4px 12px;
    gap: 17px;
}

.account button {
    gap: 5px;
}

.user {
    padding: 0 7px 0 12px;
}

/* ribbon */
.ribbon {
    display: flex;
    height: 82px;
    border-bottom: 1px solid #d9d9d9;
    background-color: #f1f1f1;
}

.workspace {
    width: 105px;
    height: 60px;
    margin: 11px 8px 0 12px;
    border: 2px solid #e0e0e0;
    border-radius: 4px;
    gap: 5px;
    font-weight: bold;
}

.tools nav {
    display: flex;
    height: 21px;
    padding-left: 7px;
    gap: 21px;
}

.tools nav a {
    padding: 4px 12px 0;
    line-height: 14px;
    height: 21px;
}

.tools nav .active {
    margin-right: 4px;
    color: #0f87c8;
    border-bottom: 3px solid #1e8bc9;
}

.groups {
    display: flex;
}

.group {
    display: flex;
    flex-direction: column;
    align-items: center;
    height: 56px;
    margin-top: 3px;
    padding: 0 5px;
    border-right: 1px solid #d8d8d8;
}

.group:first-child {
    padding-left: 0;
}

.group:last-child {
    border: none;
}

.group.wide {
    padding: 0 12px;
}

.icons {
    display: flex;
}

.icons button {
    width: 43px;
    height: 38px;
}

.icons .selected {
    width: 38px;
    background-color: #0996d8;
}

.menu {
    height: 19px;
    gap: 3px;
}

/* model area */
.viewport {
    position: relative;
    display: flex;
    flex: 1;
    flex-direction: column;
    padding: 4px;
}

/* drawing lies behind the panels */
.scene {
    position: absolute;
    top: 0;
    left: 0;
    width: 100%;
    height: 100%;
}

.scene line {
    stroke-width: 1;
}

.minor {
    stroke: #eee;
}

.major {
    stroke: #cfcfcf;
}

.edge {
    stroke: #707070;
}

.axis-x,
.axis-y {
    fill: none;
    stroke: #f58f8c;
}

.axis-y {
    stroke: #8df08d;
}

.ticks {
    font-size: 7px;
    font-style: italic;
    fill: #555;
}

.model {
    stroke: #151515;
    stroke-linejoin: round;
}

.hidden-edge {
    fill: none;
    stroke: #555a56;
    stroke-opacity: .6;
    stroke-width: 2;
}

.faint {
    stroke-opacity: .3;
    stroke-width: 1;
}

.cube-edge {
    fill: none;
    stroke: #888;
    stroke-dasharray: 5 3;
}

.cube text {
    font-size: 10px;
    fill: #777;
}

.cube .small {
    font-size: 8px;
}

.cube .z,
.cube .x {
    font-size: 12px;
    fill: #7d7ddc;
}

.cube .x {
    fill: #ee8080;
}

.panel {
    position: relative;
    display: flex;
    align-items: center;
    width: 300px;
    height: 25px;
    padding: 0 2px 0 24px;
    border: 1px solid #c4c4c4;
    border-top-color: #e6e6e6;
    background-color: #f2f2f2;
}

.panel.browser {
    padding-left: 4px;
    gap: 10px;
}

.panel h2 {
    flex: 1;
    font-size: 11px;
    font-weight: normal;
    color: #666;
}

.panel button {
    margin-right: 6px;
}

.panel.browser button {
    margin-right: -4px;
}

.grip {
    width: 3px;
    height: 11px;
    border-left: 1px solid #777;
    border-right: 1px solid #aaa;
}

.tree {
    position: relative;
    flex: 1;
    padding-top: 3px;
    list-style: none;
    font-family: "Liberation Sans", Arial, sans-serif;
}

.tree li {
    display: flex;
    align-items: center;
    height: 24px;
    padding-left: 35px;
}

.tree .root {
    padding-left: 17px;
}

.tree .leaf {
    padding-left: 72px;
}

.tree svg {
    width: 16px;
    height: 16px;
}

.open {
    width: 11px;
    height: 11px;
    margin-right: 8px;
    background: linear-gradient(90deg, #222, #888);
    clip-path: polygon(100% 0, 100% 100%, 0 100%);
}

.tree .closed {
    width: 10px;
    height: 14px;
    margin-right: 9px;
}

.chip {
    display: flex;
    align-items: center;
    height: 20px;
    padding: 0 10px 0 3px;
    gap: 9px;
    background-color: #f2f2f2;
}

.chip svg + svg {
    margin-right: 5px;
}

.chip.one svg {
    margin-right: 5px;
}

.root .chip {
    padding-right: 8px;
    gap: 6px;
}

.marked {
    display: flex;
    align-items: center;
    height: 16px;
    padding: 0 11px 0 3px;
    gap: 13px;
    color: white;
    background-color: #8f8f8f;
}

.tree .radio {
    width: 14px;
    height: 14px;
}

.bottom-row {
    display: grid;
    grid-template-columns: 300px auto 1fr;
    align-items: center;
    column-gap: 253px;
}

.navbar {
    position: relative;
    display: flex;
    align-items: center;
    height: 24px;
    padding: 0 14px 0 2px;
    gap: 7px;
    background-color: #f2f2f2;
}

.navbar button {
    gap: 4px;
}

.navbar .spaced {
    margin-left: 7px;
}

.navbar .spaced,
.navbar .spaced ~ button {
    gap: 3px;
    margin-right: -3px;
}

/* timeline */
.timeline {
    display: flex;
    height: 50px;
    padding: 0 13px 0 10px;
    border-top: 2px solid #cacaca;
    background-color: #f1f1f1;
}

.player,
.history {
    display: flex;
    align-items: center;
    gap: 11px;
}

.history {
    position: relative;
    align-items: flex-start;
    padding-top: 15px;
    margin-left: 22px;
    gap: 8px;
}

/* bracket that ties the features together */
.history::after {
    content: "";
    position: absolute;
    top: 34px;
    left: 8px;
    right: 8px;
    height: 6px;
    border: 1px solid #c9c1bf;
    border-top: none;
    background: repeating-linear-gradient(90deg, transparent 0 23px, #dcc0b8 23px 24px);
}

.marker {
    margin-top: 9px;
    margin-left: -2px;
}

.ghost {
    margin: 31px 87px 0 auto;
    padding: 0 4px;
    border: 1px solid #e8e8e8;
    font-family: "Open Sans", sans-serif;
    font-size: 11px;
    line-height: 16px;
    color: #e2e2e2;
}

.settings {
    margin-left: -8px;
}

/* windows task bar */
.taskbar {
    display: flex;
    height: 40px;
    font-family: "Open Sans", sans-serif;
    color: white;
    background: linear-gradient(90deg, #3f1b1c, #331c1e 40%, #341d1e 70%, #48201f);
}

.start {
    width: 48px;
}

.search {
    display: flex;
    align-items: center;
    width: 344px;
    padding-left: 10px;
    gap: 11px;
    border: 1px solid #bbb;
    background-color: #f1f1f1;
}

.search input {
    flex: 1;
    min-width: 0;
    border: none;
    background: none;
    font-family: inherit;
    font-size: 14px;
}

.search input::placeholder {
    color: #333;
    opacity: 1;
}

.apps {
    display: flex;
    margin-left: 1px;
}

.apps button {
    width: 49px;
    border-left: 4px solid transparent;
    border-right: 4px solid transparent;
}

.running {
    background: linear-gradient(#76b0e0, #76b0e0) bottom / 100% 3px no-repeat padding-box;
}

.apps .current {
    border: none;
    background-color: #5d4949;
}

.tray {
    display: flex;
    margin-left: auto;
    padding-right: 4px;
}

.tray button {
    width: 32px;
}

.tray .ink {
    width: 40px;
    background-color: #4c3131;
}

.tray .lang {
    width: 36px;
}

.tray .clock {
    width: 68px;
    line-height: 18px;
    text-align: center;
}

.tray .notes {
    width: 49px;
    border-right: 1px solid #6d5050;
}

.notes text {
    font-size: 10px;
    fill: white;
}
```
